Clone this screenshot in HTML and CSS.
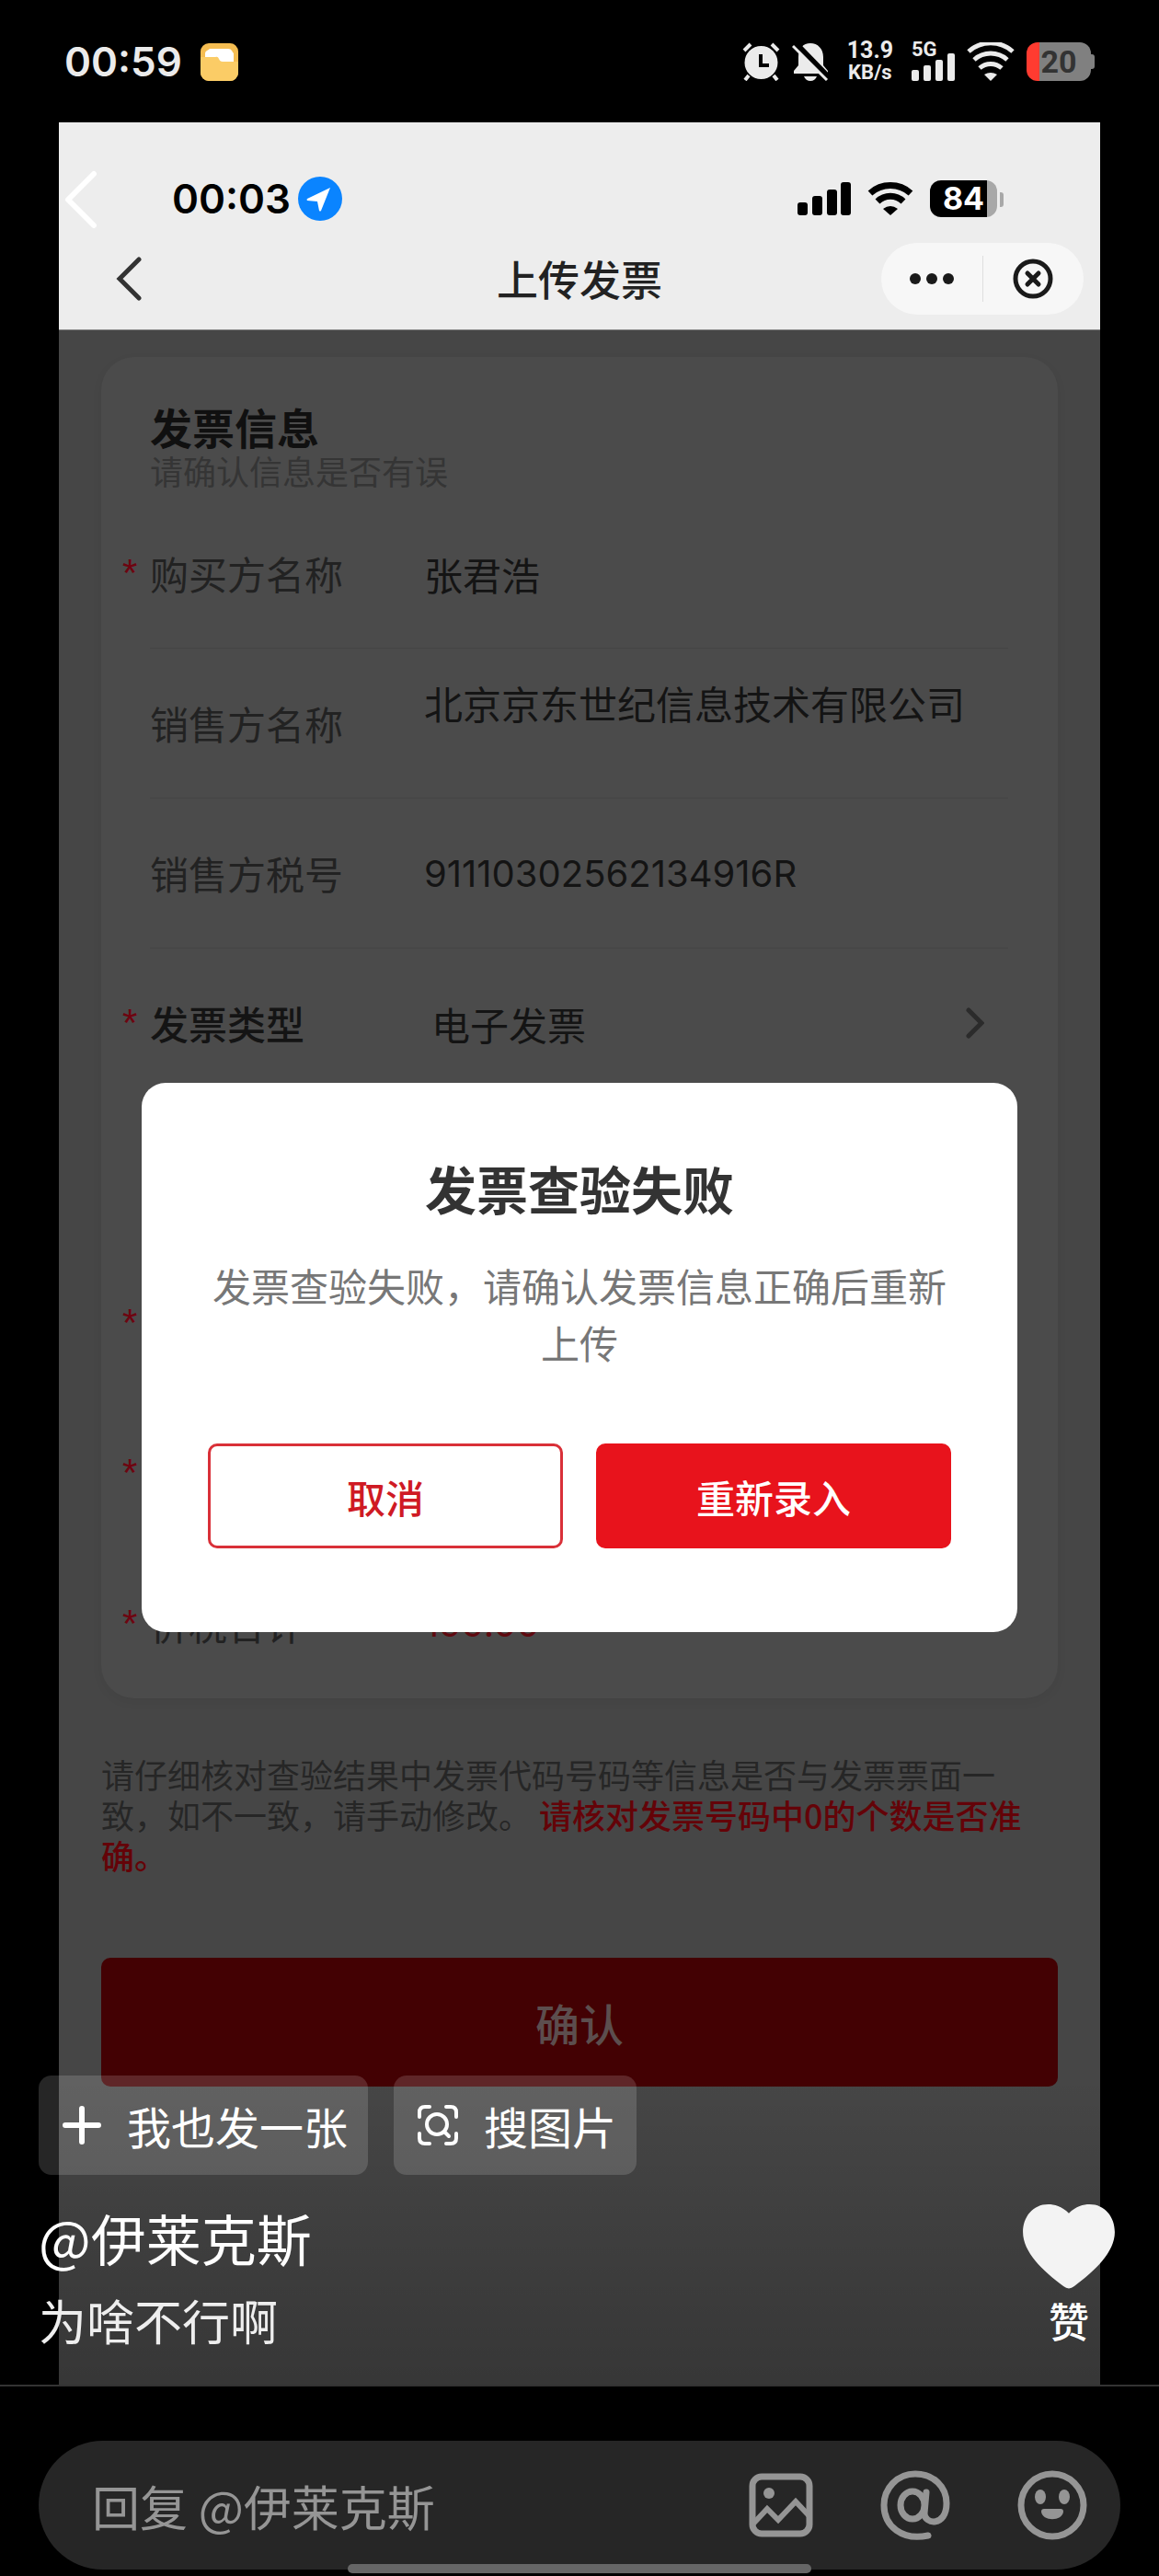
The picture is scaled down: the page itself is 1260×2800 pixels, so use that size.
FILE: index.html
```html
<!DOCTYPE html>
<html lang="zh-CN">
  <head>
    <meta charset="UTF-8" />
    <meta name="viewport" content="width=device-width, initial-scale=1.0" />
    <title>上传发票</title>
    <link rel="stylesheet" href="styles.css">
  </head>
  <body>
    <header class="status-bar">
      <div class="status-left">
        <span class="clock">00:59</span>
        <svg width="41" height="41" viewBox="0 0 41 41">
          <rect width="41" height="41" rx="9" fill="#f5bd52" />
          <path d="M0 15h20l4 5h17v12a9 9 0 0 1-9 9H9a9 9 0 0 1-9-9z" fill="#fbcc66" />
          <path d="M5 15V11q0-2 2-3t3-2h20q3 0 4 2t2 3v9H24q-3 0-4-3t-4-2z" fill="#fff" />
        </svg>
      </div>
      <div class="status-right">
        <svg width="41" height="42" viewBox="0 0 41 42" fill="#ebebeb">
          <circle cx="20.500" cy="22" r="18" />
          <path d="M2 9l7-7M39 9l-7-7M7 36l-4 5M34 36l4 5" fill="none" stroke="#ebebeb" stroke-width="4" />
          <path d="M20 13v12h9" fill="none" stroke="#000" stroke-width="4" />
        </svg>
        <svg width="40" height="42" viewBox="0 0 40 42" fill="#ebebeb">
          <path d="M2 34v-3l5-6V16C7 7 12 1 20 1s14 6 14 15v9l5 6v3z" />
          <path d="M13 37h14c-1 3-4 5-7 5s-6-2-7-5z" />
          <path d="M4 1l36 37" stroke="#000" stroke-width="6" />
          <path d="M1 4l37 37" stroke="#ebebeb" stroke-width="3" />
        </svg>
        <div class="net-speed"><span>13.9</span><small>KB/s</small></div>
        <div class="cellular">
          <span>5G</span>
          <svg width="47" height="30" viewBox="0 0 47 30" fill="#ebebeb">
            <rect y="18" width="8" height="12" rx="2" />
            <rect x="13" y="13" width="8" height="17" rx="2" />
            <rect x="26" y="7" width="8" height="23" rx="2" />
            <rect x="39" width="8" height="30" rx="2" />
          </svg>
        </div>
        <svg width="52" height="42" viewBox="0 0 52 42" fill="none" stroke="#ebebeb" stroke-width="5">
          <path d="M2 10a36 36 0 0 1 48 0M8 19a27 27 0 0 1 36 0M14 28a18 18 0 0 1 24 0" />
          <path d="M19 35q7-4 14 0l-7 7z" fill="#ebebeb" stroke="none" />
        </svg>
        <div class="battery"><span>20</span></div>
      </div>
    </header>

    <main class="viewer">
      <section class="phone">
        <div class="phone-head">
          <div class="phone-status">
            <div class="phone-time">
              <span class="clock">00:03</span>
              <svg width="48" height="48" viewBox="0 0 48 48">
                <circle cx="24" cy="24" r="24" fill="#0a84ff" />
                <path d="M35 12L10 24q-1 1 0 2l11 1 2 10q1 1 2 0z" fill="#fff" />
              </svg>
            </div>
            <div class="phone-signal">
              <svg width="58" height="36" viewBox="0 0 58 36">
                <rect y="22" width="11" height="14" rx="3" />
                <rect x="16" y="15" width="11" height="21" rx="3" />
                <rect x="32" y="8" width="11" height="28" rx="3" />
                <rect x="47" width="11" height="36" rx="3" />
              </svg>
              <svg width="50" height="36" viewBox="0 0 50 36" fill="none" stroke="#000" stroke-width="7">
                <path d="M3 12a33 33 0 0 1 44 0M11 21a20 20 0 0 1 28 0" />
                <path d="M17 29q8-6 16 0l-8 7z" fill="#000" stroke="none" />
              </svg>
              <div class="phone-battery"><span>84</span></div>
            </div>
          </div>
          <nav class="phone-nav">
            <button class="icon-btn back" aria-label="返回">
              <svg width="28" height="48" viewBox="0 0 28 48" fill="none" stroke="#333" stroke-width="5" stroke-linecap="round">
                <path d="M25 3L4 24l21 21" />
              </svg>
            </button>
            <h1>上传发票</h1>
            <div class="capsule">
              <button class="icon-btn" aria-label="更多">
                <svg width="48" height="12" viewBox="0 0 48 12" fill="#1a1a1a">
                  <circle cx="6" cy="6" r="6" />
                  <circle cx="24" cy="6" r="6" />
                  <circle cx="42" cy="6" r="6" />
                </svg>
              </button>
              <button class="icon-btn" aria-label="关闭">
                <svg width="44" height="44" viewBox="0 0 44 44" fill="none" stroke="#1a1a1a" stroke-width="5">
                  <circle cx="22" cy="22" r="19" />
                  <path d="M16 16l12 12M28 16L16 28" stroke-linecap="round" />
                </svg>
              </button>
            </div>
          </nav>
        </div>

        <div class="phone-body">
          <form class="invoice">
            <div class="card">
              <div class="card-head">
                <h2>发票信息</h2>
                <p>请确认信息是否有误</p>
              </div>
              <div class="row">
                <span class="star">*</span>
                <label for="buyer">购买方名称</label>
                <input type="text" id="buyer" value="张君浩" />
              </div>
              <div class="row">
                <label for="seller">销售方名称</label>
                <textarea id="seller" rows="2">北京京东世纪信息技术有限公司</textarea>
              </div>
              <div class="row">
                <label for="taxNo">销售方税号</label>
                <input type="text" id="taxNo" class="latin" value="91110302562134916R" />
              </div>
              <div class="row">
                <span class="star">*</span>
                <label for="type" class="strong">发票类型</label>
                <select id="type">
                  <option>电子发票</option>
                </select>
                <svg class="arrow" width="20" height="34" viewBox="0 0 20 34" fill="none" stroke="#2b2b2b" stroke-width="5" stroke-linecap="round">
                  <path d="M3 3l14 14L3 31" />
                </svg>
              </div>
              <div class="row"></div>
              <div class="row"><span class="star">*</span></div>
              <div class="row"><span class="star">*</span></div>
              <div class="row">
                <span class="star">*</span>
                <label for="total">价税合计</label>
                <input type="text" id="total" class="latin amount" value="199.00" />
              </div>
            </div>
            <p class="note">请仔细核对查验结果中发票代码号码等信息是否与发票票面一致，如不一致，请手动修改。 <strong>请核对发票号码中0的个数是否准确。</strong></p>
            <button type="button" class="confirm">确认</button>
          </form>

          <div class="dialog-wrap">
            <div class="dialog" role="dialog" aria-labelledby="dialogTitle">
              <h2 id="dialogTitle">发票查验失败</h2>
              <p>发票查验失败，请确认发票信息正确后重新上传</p>
              <div class="dialog-actions">
                <button class="cancel">取消</button>
                <button class="retry">重新录入</button>
              </div>
            </div>
          </div>
        </div>
      </section>

      <button class="icon-btn viewer-back" aria-label="退出">
        <svg width="36" height="64" viewBox="0 0 36 64" fill="none" stroke="#fff" stroke-width="6" stroke-linecap="round" stroke-linejoin="round">
          <path d="M32 4L4 32l28 28" />
        </svg>
      </button>

      <div class="caption">
        <div class="pills">
          <button class="pill">
            <svg width="42" height="42" viewBox="0 0 42 42" stroke="#fff" stroke-width="6" stroke-linecap="round">
              <path d="M21 3v36M3 21h36" />
            </svg>
            我也发一张
          </button>
          <button class="pill">
            <svg width="44" height="44" viewBox="0 0 44 44" fill="none" stroke="#fff" stroke-width="4" stroke-linecap="round">
              <path d="M2 13V8q0-6 6-6h5M31 2h5q6 0 6 6v5M42 31v5q0 6-6 6h-5M13 42H8q-6 0-6-6v-5" />
              <circle cx="21" cy="21" r="11" />
              <path d="M29 29l5 5" />
            </svg>
            搜图片
          </button>
        </div>
        <div class="post">
          <div>
            <a class="author" href="#">@伊莱克斯</a>
            <p class="comment">为啥不行啊</p>
          </div>
          <button class="like">
            <svg width="100" height="92" viewBox="0 0 102 94">
              <path d="M51 10C59 2 67 0 74 0c17 0 28 14 28 31 0 22-22 43-45 60q-6 5-12 0C22 74 0 53 0 31 0 14 11 0 28 0c7 0 15 2 23 10z" fill="#f3f3f3" />
            </svg>
            赞
          </button>
        </div>
      </div>
    </main>

    <footer class="reply-bar">
      <div class="reply-box">
        <input type="text" placeholder="回复 @伊莱克斯" aria-label="回复" />
        <button class="icon-btn" aria-label="图片">
          <svg width="70" height="70" viewBox="0 0 70 70" fill="none" stroke="#959595" stroke-width="7">
            <rect x="4" y="4" width="62" height="62" rx="10" />
            <circle cx="22" cy="22" r="6" fill="#959595" stroke="none" />
            <path d="M5 55l15-16 12 12 19-20 15 16" stroke-width="6" />
          </svg>
        </button>
        <button class="icon-btn" aria-label="提到">
          <svg width="76" height="76" viewBox="0 0 76 76" fill="none" stroke="#959595" stroke-width="7" stroke-linecap="round">
            <ellipse cx="35" cy="38" rx="13" ry="15" />
            <path d="M50 24l-2 23c0 12 24 15 24-11C72 18 58 4 38 4 18 4 4 20 4 38c0 23 20 39 48 33" />
          </svg>
        </button>
        <button class="icon-btn" aria-label="表情">
          <svg width="76" height="76" viewBox="0 0 76 76" fill="#959595">
            <circle cx="38" cy="38" r="34" fill="none" stroke="#959595" stroke-width="7" />
            <ellipse cx="25" cy="29" rx="6" ry="8" />
            <ellipse cx="51" cy="29" rx="6" ry="8" />
            <path d="M29 42h18q3 0 3 3c-1 11-23 11-24 0q0-3 3-3z" />
          </svg>
        </button>
      </div>
      <div class="home-indicator"></div>
    </footer>
  </body>
</html>
```
FILE: styles.css
```css
* {
  box-sizing: border-box;
}
body {
  margin: 0;
  background-color: #000;
  font-family: "Noto Sans CJK SC", sans-serif;
}
h1,
h2,
p {
  margin: 0;
}
svg {
  display: block;
  flex: none;
}
button,
input,
select,
textarea {
  margin: 0;
  padding: 0;
  border: none;
  background: none;
  font-family: inherit;
  color: inherit;
}
button {
  cursor: pointer;
}
.clock {
  font-family: Inter, sans-serif;
  font-size: 44px;
  font-weight: 600;
  line-height: 48px;
}

/* outer status bar */
.status-bar {
  display: flex;
  justify-content: space-between;
  padding: 43px 70px 42px;
  color: #ebebeb;
}
.status-left,
.status-right {
  display: flex;
  align-items: center;
  height: 48px;
}
.status-left {
  gap: 20px;
}
.status-right {
  gap: 13px;
}
.net-speed {
  display: flex;
  flex-direction: column;
  align-items: center;
  padding: 0 7px;
  font-family: Roboto, sans-serif;
  font-size: 25px;
  font-weight: 700;
  line-height: 24px;
}
.net-speed small {
  font-size: 22px;
}
.cellular {
  position: relative;
  height: 42px;
  padding-top: 12px;
}
.cellular span {
  position: absolute;
  top: 0;
  left: 0;
  font-family: Roboto, sans-serif;
  font-size: 22px;
  font-weight: 700;
  line-height: 16px;
}
.battery {
  position: relative;
  width: 70px;
  margin-right: 4px;
  border-radius: 12px;
  background: linear-gradient(to right, #ff3b30 14px, #808080 14px);
  color: #333;
  font-family: Roboto, sans-serif;
  font-size: 34px;
  font-weight: 700;
  line-height: 42px;
  text-align: center;
}
.battery::after,
.phone-battery::after {
  content: "";
  position: absolute;
  right: -4px;
  top: 13px;
  width: 4px;
  height: 16px;
  border-radius: 0 3px 3px 0;
  background-color: #808080;
}

/* screenshot in the viewer */
.viewer {
  position: relative;
}
.phone {
  margin: 0 64px;
}
.phone-head {
  padding-top: 59px;
  padding-bottom: 16px;
  border-bottom: 1px solid #888;
  background-color: #ededed;
}
.phone-status {
  display: flex;
  justify-content: space-between;
  padding: 0 105px 0 123px;
  color: #000;
}
.phone-time {
  display: flex;
  align-items: center;
  gap: 8px;
}
.phone-signal {
  display: flex;
  align-items: center;
  gap: 18px;
}
.phone-battery {
  position: relative;
  width: 73px;
  margin-right: 7px;
  border-radius: 12px;
  background: linear-gradient(to right, #000 62px, #a8a8a8 62px);
  color: #fff;
  font-family: Inter, sans-serif;
  font-size: 34px;
  font-weight: 700;
  line-height: 40px;
  text-align: center;
}
.phone-battery::after {
  right: -7px;
  background-color: #a8a8a8;
}
.icon-btn {
  display: flex;
  align-items: center;
  justify-content: center;
}
.phone-nav {
  display: grid;
  grid-template-columns: 1fr auto 1fr;
  align-items: center;
  margin-top: 24px;
  padding: 0 18px;
}
.phone-nav h1 {
  color: #222;
  font-size: 45px;
  font-weight: 500;
  line-height: 60px;
}
.back {
  justify-self: start;
  margin-left: 44px;
}
.capsule {
  justify-self: end;
  display: flex;
  align-items: center;
  width: 220px;
  height: 78px;
  border-radius: 39px;
  background-color: #f7f7f7;
}
.capsule .icon-btn {
  flex: 1;
  height: 50px;
}
.capsule .icon-btn + .icon-btn {
  border-left: 1px solid #dedede;
}
.phone-body {
  position: relative;
  padding: 29px 46px 324px;
  background-color: #464646;
}

/* invoice form, dimmed behind the dialog */
.card {
  padding: 0 54px 0 53px;
  border-radius: 36px;
  background-color: #4b4b4b;
  box-shadow: 0 4px 12px rgba(0, 0, 0, 0.05);
}
.card-head {
  height: 154px;
  padding-top: 47px;
}
.card-head h2 {
  color: #101010;
  font-size: 46px;
  font-weight: 700;
  line-height: 56px;
}
.card-head p {
  color: #353535;
  font-size: 36px;
  line-height: 40px;
}
.row {
  display: flex;
  align-items: center;
  height: 163px;
  border-bottom: 1px solid #444;
  color: #141414;
  font-size: 42px;
  line-height: 56px;
}
.row:last-child {
  border-bottom: none;
}
.row label {
  flex: none;
  width: 298px;
  color: #222;
}
.row .strong {
  color: #141414;
  font-weight: 500;
}
.row input,
.row select,
.row textarea {
  flex: 1;
  min-width: 0;
  font-size: 42px;
}
.row textarea {
  line-height: 44px;
  resize: none;
  overflow: hidden;
}
.row select {
  padding-left: 8px;
  appearance: none;
}
.row .latin {
  font-family: Inter, sans-serif;
  font-size: 40px;
}
.row .amount {
  color: #5f0a10;
}
.arrow {
  margin-right: 26px;
}
.star {
  flex: none;
  width: 30px;
  margin-left: -30px;
  color: #6e0410;
  font-family: "Liberation Sans", sans-serif;
  font-size: 42px;
}
.note {
  margin-top: 60px;
  color: #262626;
  font-size: 36px;
  line-height: 44px;
}
.note strong {
  color: #640308;
  font-weight: 500;
}
.confirm {
  display: block;
  width: 100%;
  margin-top: 90px;
  border-radius: 10px;
  background-color: #430103;
  color: #5c4e4e;
  font-size: 48px;
  font-weight: 500;
  line-height: 140px;
}

/* failure dialog */
.dialog-wrap {
  position: absolute;
  inset: 0;
  display: flex;
  align-items: center;
  padding: 0 90px;
}
.dialog {
  flex: 1;
  padding: 74px 72px 91px;
  border-radius: 26px;
  background-color: #fff;
  text-align: center;
}
.dialog h2 {
  color: #333;
  font-size: 56px;
  font-weight: 700;
  line-height: 80px;
}
.dialog p {
  margin-top: 35px;
  color: #777;
  font-size: 42px;
  line-height: 62px;
}
.dialog-actions {
  display: flex;
  gap: 36px;
  margin-top: 79px;
}
.dialog-actions button {
  flex: 1;
  height: 114px;
  border: 3px solid #e8131c;
  border-radius: 10px;
  font-size: 42px;
  font-weight: 500;
}
.dialog-actions .cancel {
  border-color: #d93038;
  color: #cf1a24;
}
.dialog-actions .retry {
  background-color: #e8131c;
  color: #fff;
}

/* viewer overlay */
.viewer-back {
  position: absolute;
  top: 52px;
  left: 70px;
}
.caption {
  position: absolute;
  left: 0;
  right: 0;
  bottom: 0;
  padding: 0 42px 36px;
  background: linear-gradient(rgba(0, 0, 0, 0), rgba(0, 0, 0, 0.22));
  color: #fff;
}
.pills {
  display: flex;
  gap: 28px;
}
.pill {
  display: flex;
  align-items: center;
  gap: 28px;
  height: 108px;
  padding: 0 22px 0 26px;
  border-radius: 14px;
  background-color: rgba(255, 255, 255, 0.15);
  font-size: 48px;
}
.post {
  display: flex;
  justify-content: space-between;
  align-items: flex-start;
  padding-top: 28px;
}
.author {
  display: block;
  color: #fff;
  font-size: 60px;
  line-height: 80px;
  text-decoration: none;
}
.comment {
  margin-top: 16px;
  color: #eee;
  font-size: 52px;
  line-height: 68px;
}
.like {
  display: flex;
  flex-direction: column;
  align-items: center;
  gap: 6px;
  margin: 4px 6px 0 0;
  font-size: 44px;
  font-weight: 500;
  line-height: 56px;
}

/* reply bar */
.reply-bar {
  position: relative;
  padding: 59px 42px 7px;
  border-top: 2px solid #333;
}
.reply-box {
  display: flex;
  align-items: center;
  gap: 73px;
  height: 140px;
  padding: 0 36px 0 58px;
  border-radius: 70px;
  background-color: #262626;
}
.reply-box input {
  flex: 1;
  min-width: 0;
  color: #959595;
  font-size: 52px;
}
.reply-box input::placeholder {
  color: #959595;
}
.home-indicator {
  position: absolute;
  bottom: 3px;
  left: 30%;
  width: 40%;
  height: 10px;
  border-radius: 5px;
  background-color: #666;
}
```
